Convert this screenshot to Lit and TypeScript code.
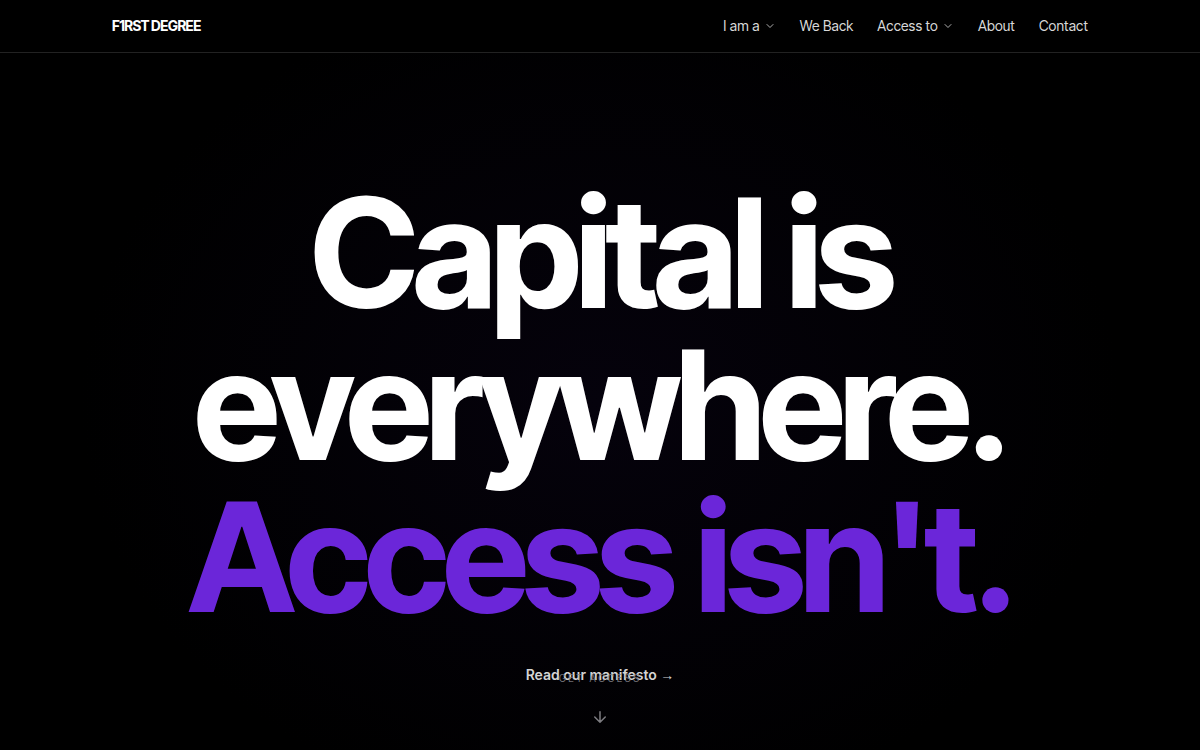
import { LitElement, html, css } from "lit";
import { customElement } from "lit/decorators.js";

const chevron = html`<svg class="chevron" width="12" height="12" viewBox="0 0 24 24" fill="none" stroke="currentColor" stroke-width="2" stroke-linecap="round" stroke-linejoin="round" aria-hidden="true"><path d="m6 9 6 6 6-6" /></svg>`;

@customElement("site-header")
class SiteHeader extends LitElement {
  static styles = css`
    :host { display: block; position: sticky; top: 0; z-index: 2; background: #000; border-bottom: 1px solid #222; }
    .bar { display: flex; align-items: center; justify-content: space-between; height: 52px; max-width: 976px; margin: 0 auto; }
    .brand { color: #fff; font-size: 14px; font-weight: 700; line-height: 20px; letter-spacing: -0.04em; text-decoration: none; }
    .links { display: flex; align-items: center; gap: 24px; }
    .item { display: flex; align-items: center; gap: 4px; padding: 0; border: 0; background: none; color: #d9d9d9; font: 400 14px/20px "Inter Tight", Inter, sans-serif; letter-spacing: 0.01em; text-decoration: none; cursor: pointer; }
    .chevron { opacity: 0.8; }
  `;
  render() {
    return html`<header class="bar">
      <a class="brand" href="#">F1RST DEGREE</a>
      <nav class="links">
        <button class="item" aria-haspopup="true">I am a ${chevron}</button>
        <a class="item" href="#we-back">We Back</a>
        <button class="item" aria-haspopup="true">Access to ${chevron}</button>
        <a class="item" href="#about">About</a>
        <a class="item" href="#contact">Contact</a>
      </nav>
    </header>`;
  }
}

@customElement("app-root")
class AppRoot extends LitElement {
  static styles = css`
    :host { display: flex; flex-direction: column; min-height: 100vh; background: #000; color: #fff; font-family: "Inter Tight", Inter, sans-serif; }
    .hero { position: relative; flex: 1; display: flex; flex-direction: column; align-items: center; justify-content: center; gap: 32px; padding: 58px 24px 0; background: radial-gradient(ellipse 520px 420px at 50% 50%, #05020c 0%, #000 100%); }
    .title { margin: 0; font-size: 152px; line-height: 152px; font-weight: 700; letter-spacing: -0.04em; text-align: center; }
    .line { display: block; }
    .accent { color: #6b26d9; }
    .manifesto { color: #d4d4d4; font-family: Inter, sans-serif; font-size: 14px; line-height: 20px; font-weight: 600; text-decoration: none; }
    .arrow { font-family: "Liberation Sans", sans-serif; }
    .cue { position: absolute; left: 0; right: 0; bottom: 24px; display: flex; flex-direction: column; align-items: center; gap: 24px; color: #7c7b80; text-decoration: none; pointer-events: none; }
    .label { font-family: Inter, sans-serif; font-size: 10px; line-height: 12px; letter-spacing: 0.2em; opacity: 0.9; }
  `;
  render() {
    return html`<site-header></site-header>
      <main class="hero">
        <h1 class="title">
          <span class="line">Capital is</span>
          <span class="line">everywhere.</span>
          <span class="line accent">Access isn't.</span>
        </h1>
        <a class="manifesto" href="#manifesto">Read our manifesto <span class="arrow">→</span></a>
        <a class="cue" href="#access">
          <span class="label">GET ACCESS</span>
          <svg width="18" height="18" viewBox="0 0 24 24" fill="none" stroke="currentColor" stroke-width="2" stroke-linecap="round" stroke-linejoin="round" aria-hidden="true"><path d="M12 5v14M5 12l7 7 7-7" /></svg>
        </a>
      </main>`;
  }
}
